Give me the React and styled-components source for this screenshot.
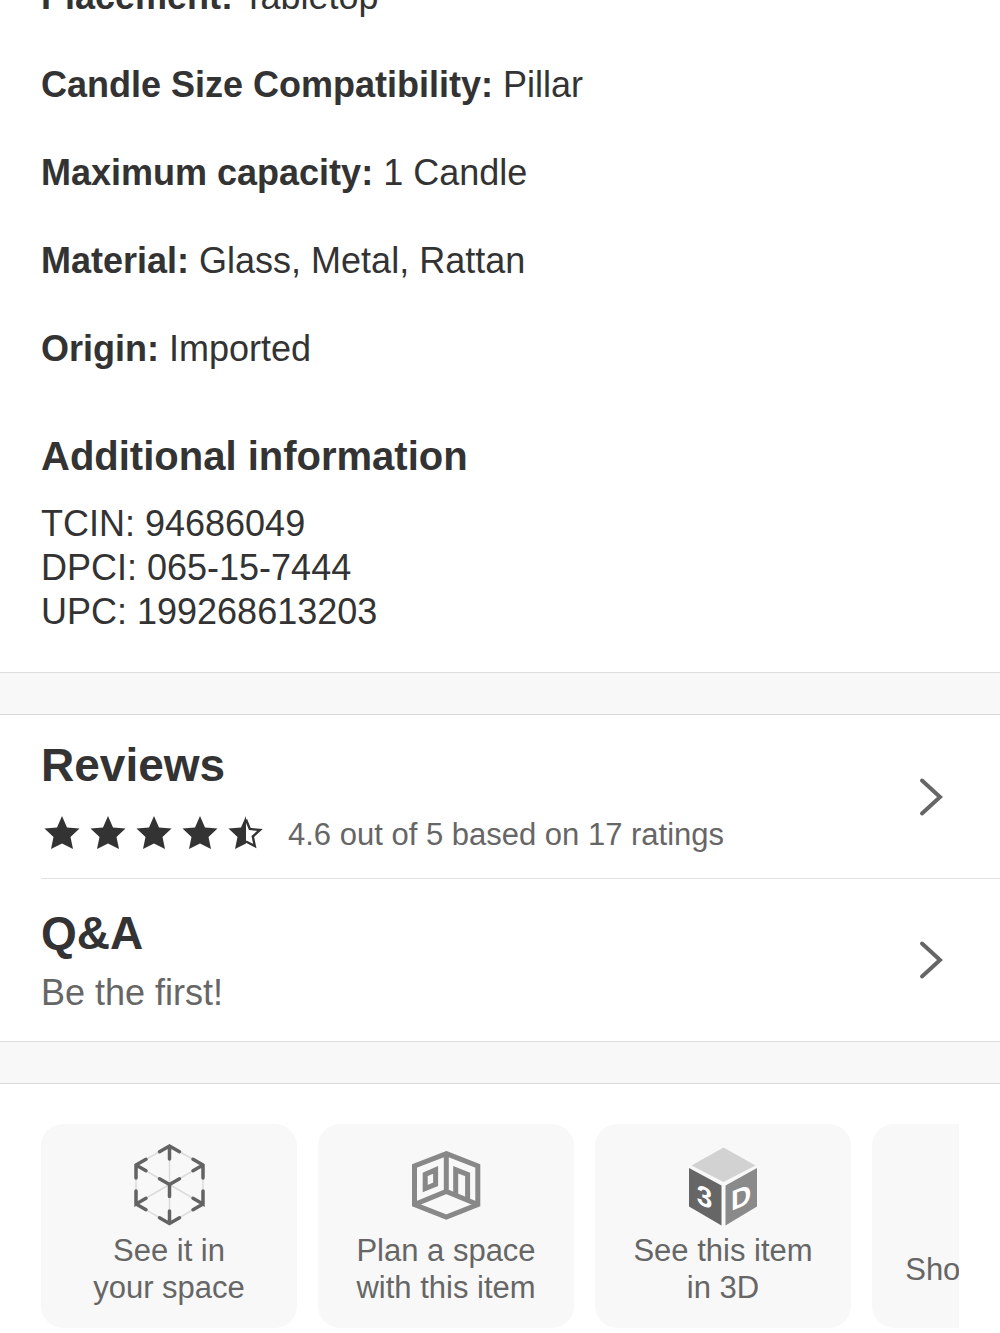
import React from 'react';
import styled, { createGlobalStyle } from 'styled-components';

const GlobalStyle = createGlobalStyle`
* {
  box-sizing: border-box;
}
body {
  margin: 0;
  background: #fff;
  color: #333;
  font-family: "Liberation Sans", Arial, sans-serif;
  font-size: 36px;
  line-height: 44px;
}
h2, h3, p, ul {
  margin: 0;
  padding: 0;
}
`;

const Page = styled.main`
overflow: hidden;
`;

/* the list is scrolled a little, so its first row starts above the window */
const Details = styled.section`
margin-top: -25px;
padding: 0 41px 38px;
`;

const SpecList = styled.ul`
display: flex;
flex-direction: column;
gap: 44px;
list-style: none;
`;

const InfoTitle = styled.h3`
margin-top: 59px;
margin-bottom: 20px;
font-size: 40px;
line-height: 52px;
`;

const Band = styled.div`
height: 43px;
background: #f8f8f8;
border-top: 1px solid #dedede;
border-bottom: 1px solid #d8d8d8;
`;

const LinkList = styled.nav`
padding-left: 41px;
`;

const RowLink = styled.a`
display: flex;
align-items: center;
justify-content: space-between;
min-height: 163px;
padding-right: 56px;
color: inherit;
text-decoration: none;

& + & {
  border-top: 1px solid #e0e0e0;
}
`;

const RowText = styled.div`
display: flex;
flex-direction: column;
gap: ${props => props.$gap};
`;

const RowTitle = styled.h2`
font-size: 46px;
line-height: 56px;
`;

const Rating = styled.div`
display: flex;
align-items: center;
gap: 24px;
color: #666;
font-size: 31px;
`;

const Stars = styled.div`
display: flex;
gap: 10px;
padding: 0 0 4px 3px;
color: #333;
`;

const Note = styled.p`
color: #666;
`;

const Carousel = styled.section`
display: flex;
gap: 21px;
margin: 40px 41px 5px;
overflow: hidden;
`;

const Card = styled.button`
display: flex;
flex: 0 0 256px;
flex-direction: column;
align-items: center;
gap: 6px;
padding: 18px 0 22px;
border: 0;
border-radius: 22px;
background: #f8f8f8;
color: #666;
font-family: inherit;
font-size: 31px;
line-height: 37px;
`;

const IconSlot = styled.span`
display: block;
width: 84px;
height: 84px;

svg {
  display: block;
}
`;

const CardLabel = styled.span`
display: flex;
flex: 1;
align-items: center;
white-space: pre-line;
`;

const STAR = 'M18 1L23 12.5L35.5 13.5L26.5 22L29 34L18 28.5L7 34L9.5 22L.5 13.5L13 12.5Z';

const Star = ({ half }) => (
  <svg width="36" height="36" viewBox="0 0 36 36" fill="currentColor" aria-hidden="true">
    {half ? (
      <>
        <path d="M18 1V28.5L7 34L9.5 22L.5 13.5L13 12.5Z" />
        <path
          d="M18 4.5L21.8 14L32 15L24.8 21.5L26.8 31L18 26.5"
          fill="none"
          stroke="currentColor"
          strokeWidth="2.4"
        />
      </>
    ) : <path d={STAR} />}
  </svg>
);

const Chevron = () => (
  <svg width="26" height="40" viewBox="0 0 26 40" fill="none" aria-hidden="true">
    <path d="M4 3.5L22 20L4 36.5" stroke="#666" strokeWidth="4" strokeLinecap="round" />
  </svg>
);

const SpaceIcon = () => (
  <svg width="84" height="84" viewBox="0 0 84 84" fill="none" aria-hidden="true">
    <path
      d="M42.5 4L76 23V62L42.5 81.5L9 62V23ZM42.5 4V81.5M9 23L76 62M76 23L9 62"
      stroke="#dcdcdc"
      strokeWidth="1.5"
    />
    <g stroke="#636363" strokeWidth="3.5" strokeLinecap="round">
      <path d="M32.5 9.7L42.5 4L52.5 9.7M42.5 4V17" />
      <path d="M9 36V23L19 17.3M9 23L19 28.7" />
      <path d="M76 36V23L66 17.3M76 23L66 28.7" />
      <path d="M9 49V62L19 56.3M9 62L19 67.7" />
      <path d="M76 49V62L66 56.3M76 62L66 67.7" />
      <path d="M32.5 75.8L42.5 81.5L52.5 75.8M42.5 81.5V69" />
      <path d="M32.5 36.8L42.5 42.5L52.5 36.8M42.5 42.5V54.5" />
    </g>
  </svg>
);

const RoomIcon = () => (
  <svg width="84" height="84" viewBox="0 0 84 84" fill="none" aria-hidden="true">
    <g stroke="#888" strokeWidth="5">
      <path d="M42.3 11.7L73.8 24V62.5L42.3 75L10.5 62.5V24Z" />
      <path d="M42.3 11.7V49.5M10.5 62.5L42.3 49.5L73.8 62.5" />
      <path d="M21.2 32.4L31.6 27.9V42.4L21.2 46.5Z" />
      <path d="M51.7 52.5V27.8L63.6 32.5V57.5" />
    </g>
  </svg>
);

const CubeIcon = () => (
  <svg width="84" height="84" viewBox="0 0 84 84" aria-hidden="true">
    <path d="M42.5 5.5L74.5 23.5L42.5 40L10.5 23.5Z" fill="#d2d2d2" />
    <path d="M8 26L40.5 43.5V83.5L8 64.5Z" fill="#666" />
    <path d="M44.5 43.5L76 26V64.5L44.5 83.5Z" fill="#8a8a8a" />
    <g fill="#fff" fontSize="28" fontWeight="700" textAnchor="middle">
      <text transform="translate(23.5 54.5) skewY(22)" y="10">3</text>
      <text transform="translate(60 55) skewY(-22)" y="10">D</text>
    </g>
  </svg>
);

const specs = [
  ['Placement', 'Tabletop'],
  ['Candle Size Compatibility', 'Pillar'],
  ['Maximum capacity', '1 Candle'],
  ['Material', 'Glass, Metal, Rattan'],
  ['Origin', 'Imported'],
];

const cards = [
  { label: 'See it in\nyour space', icon: <SpaceIcon /> },
  { label: 'Plan a space\nwith this item', icon: <RoomIcon /> },
  { label: 'See this item\nin 3D', icon: <CubeIcon /> },
  { label: 'Shop the look' },
];

export default () => (
  <Page>
    <GlobalStyle />
    <Details>
      <SpecList>
        {specs.map(([name, value]) => (
          <li key={name}><b>{name}:</b> {value}</li>
        ))}
      </SpecList>
      <InfoTitle>Additional information</InfoTitle>
      <p>TCIN: 94686049</p>
      <p>DPCI: 065-15-7444</p>
      <p>UPC: 199268613203</p>
    </Details>
    <Band />
    <LinkList>
      <RowLink href="#reviews">
        <RowText $gap="20px">
          <RowTitle>Reviews</RowTitle>
          <Rating>
            <Stars>
              <Star />
              <Star />
              <Star />
              <Star />
              <Star half />
            </Stars>
            <span>4.6 out of 5 based on 17 ratings</span>
          </Rating>
        </RowText>
        <Chevron />
      </RowLink>
      <RowLink href="#qa">
        <RowText $gap="10px">
          <RowTitle>Q&amp;A</RowTitle>
          <Note>Be the first!</Note>
        </RowText>
        <Chevron />
      </RowLink>
    </LinkList>
    <Band />
    <Carousel>
      {cards.map(card => (
        <Card key={card.label} type="button">
          <IconSlot>{card.icon}</IconSlot>
          <CardLabel>{card.label}</CardLabel>
        </Card>
      ))}
    </Carousel>
  </Page>
);
